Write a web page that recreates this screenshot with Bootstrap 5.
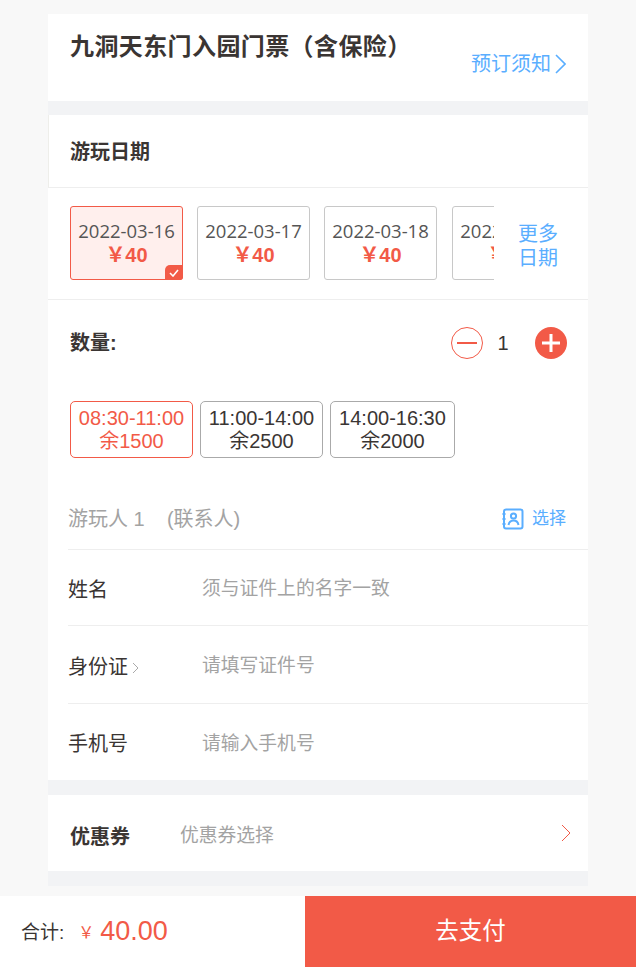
<!doctype html>
<html lang="zh-CN">
<head>
<meta charset="UTF-8" />
<meta name="viewport" content="width=device-width, initial-scale=1.0" />
<title>填写订单</title>
<link href="https://cdn.jsdelivr.net/npm/bootstrap@5.3.0/dist/css/bootstrap.min.css" rel="stylesheet" />
<style>
  html, body { height: 967px; overflow: hidden; }
  body { background: #f8f8f8; color: #3a3533; font-family: "Microsoft YaHei", "Liberation Sans", "Noto Sans CJK SC", sans-serif; font-size: 20px; line-height: 1.2; }
  .panel-box { width: 540px; margin: 14px 0 0 48px; background: #fff; }
  .spacer-bar { height: 14px; background: #f2f3f5; }
  .spacer-bar.wide { height: 15px; }
  .title-block { height: 87px; padding: 18px 22px 0; }
  .title-text { font-size: 24px; font-weight: 700; line-height: 30px; letter-spacing: .4px; }
  .blue-text { color: #5aaeff; }
  .notice-link { margin-top: 20px; font-size: 20px; line-height: 24px; gap: 3px; }
  .date-head { height: 73px; padding: 1px 0 0 21px; border-left: 1px solid #eeeeea; border-bottom: 1px solid #eeeeee; font-weight: 700; }
  .date-row { height: 112px; padding: 18px 22px; border-bottom: 1px solid #eeeeee; }
  .date-strip { width: 424px; overflow: hidden; gap: 14px; }
  .date-card { flex: 0 0 113px; height: 74px; border: 1px solid #c8c8c8; border-radius: 3px; color: #555; font-family: "Open Sans", "Noto Sans CJK SC", sans-serif; font-size: 18.5px; padding-top: 11px; position: relative; text-align: center; line-height: 25px; }
  .date-card:last-child { margin-left: 1px; }
  .date-card b { color: #f25a47; font-size: 20px; display: block; font-family: "Liberation Sans", "Noto Sans CJK SC", sans-serif; }
  .date-card.on { background: #ffefed; border-color: #f25a47; }
  .tick-mark { position: absolute; right: -1px; bottom: -1px; width: 18px; height: 15px; background: #f25a47; border-radius: 5px 0 3px 0; display: flex; align-items: center; justify-content: center; }
  .more-link { width: 40px; margin-left: 24px; line-height: 24px; margin-top: 16px; }
  .qty-row { height: 86px; padding: 0 21px 0 22px; }
  .qty-num { width: 52px; padding-right: 12px; text-align: center; font-family: "Liberation Sans", sans-serif; font-size: 20px; }
  .slot-row { gap: 7px; padding-left: 22px; margin-top: 15px; }
  .slot-item { width: 123px; height: 57px; padding-top: 5px; border: 1px solid #aaa; border-radius: 5px; text-align: center; line-height: 23px; font-family: "Liberation Sans", "Noto Sans CJK SC", sans-serif; }
  .slot-item.on { border-color: #f25a47; color: #f25a47; }
  .slot-item.last { width: 125px; }
  .person-head { height: 92px; margin-left: 20px; padding: 49px 22px 0 0; border-bottom: 1px solid #eeeeee; color: #a3a3a3; }
  .person-head .blue-text { font-size: 17px; line-height: 24px; }
  .form-line { height: 78px; margin-left: 20px; padding-top: 4px; border-bottom: 1px solid #eeeeee; }
  .form-line.first { height: 76px; }
  .form-line.end { border-bottom: 0; height: 76px; }
  .form-key { width: 134px; }
  .hint-text { color: #a3a3a3; font-size: 18.8px; }
  .coupon-row { height: 76px; padding: 7px 17px 0 22px; }
  .coupon-row svg { margin-top: -7px; }
  .coupon-key { width: 110px; font-weight: 700; }
  .total-bar { height: 71px; margin-top: 10px; background: #fff; }
  .total-left { width: 305px; padding-left: 21px; }
  .total-label { font-size: 19px; margin: 3px 14px 0 0; }
  .total-unit { font-size: 16px; margin: 3px 6px 0 0; color: #f25a47; }
  .total-num { font-size: 27px; color: #f25a47; }
  .pay-btn { width: 331px; height: 71px; background: #f25a47; color: #fff; font-size: 23.5px; border: 0; border-radius: 0; }
</style>
</head>
<body>
<div class="panel-box">
  <div class="title-block d-flex justify-content-between">
    <div class="title-text">九洞天东门入园门票（含保险）</div>
    <div class="notice-link blue-text d-flex align-items-center align-self-start">预订须知<svg width="12" height="22" viewBox="0 0 12 22" fill="none" stroke="#5aaeff" stroke-width="1.6"><path d="M2 2l9 9-9 9"/></svg></div>
  </div>
  <div class="spacer-bar"></div>

  <div class="date-head d-flex align-items-center">游玩日期</div>
  <div class="date-row d-flex">
    <div class="date-strip d-flex">
      <div class="date-card on">2022-03-16<b>￥40</b>
        <span class="tick-mark"><svg width="10" height="8" viewBox="0 0 10 8" fill="none" stroke="#fff" stroke-width="1.6"><path d="M1 4l3 3 5-6"/></svg></span>
      </div>
      <div class="date-card">2022-03-17<b>￥40</b></div>
      <div class="date-card">2022-03-18<b>￥40</b></div>
      <div class="date-card">2022-03-19<b>￥40</b></div>
    </div>
    <div class="more-link blue-text">更多日期</div>
  </div>

  <div class="qty-row d-flex align-items-center justify-content-between">
    <b>数量:</b>
    <div class="d-flex align-items-center">
      <svg width="32" height="32" viewBox="0 0 32 32"><circle cx="16" cy="16" r="15.500" fill="#fff" stroke="#f25a47"/><path d="M6 16h20" stroke="#f25a47" stroke-width="2"/></svg>
      <span class="qty-num">1</span>
      <svg width="32" height="32" viewBox="0 0 32 32"><circle cx="16" cy="16" r="16" fill="#f25a47"/><path d="M7 16h18M16 7v18" stroke="#fff" stroke-width="3"/></svg>
    </div>
  </div>

  <div class="slot-row d-flex">
    <div class="slot-item on">08:30-11:00<br>余1500</div>
    <div class="slot-item">11:00-14:00<br>余2500</div>
    <div class="slot-item last">14:00-16:30<br>余2000</div>
  </div>

  <div class="person-head d-flex justify-content-between">
    <span class="align-self-start">游玩人 1 &nbsp;&nbsp;&nbsp;(联系人)</span>
    <span class="blue-text d-flex align-items-center align-self-start gap-2">
      <svg width="22" height="22" viewBox="0 0 22 22" fill="none" stroke="#5aaeff" stroke-width="2"><rect x="2" y="1.500" width="18.500" height="19" rx="2"/><circle cx="11.500" cy="8" r="2.600"/><path d="M6.500 17c.5-3 2.500-4.500 5-4.500s4.500 1.500 5 4.500M.5 6h3M.5 11h3M.5 16h3"/></svg>
      选择
    </span>
  </div>
  <div class="form-line first d-flex align-items-center"><span class="form-key">姓名</span><span class="hint-text">须与证件上的名字一致</span></div>
  <div class="form-line d-flex align-items-center">
    <span class="form-key d-flex align-items-center">身份证<svg class="ms-1" width="8" height="14" viewBox="0 0 8 14" fill="none" stroke="#aaa"><path d="M1 3l5 5-5 5"/></svg></span>
    <span class="hint-text">请填写证件号</span>
  </div>
  <div class="form-line end d-flex align-items-center"><span class="form-key">手机号</span><span class="hint-text">请输入手机号</span></div>
  <div class="spacer-bar wide"></div>

  <div class="coupon-row d-flex align-items-center">
    <span class="coupon-key">优惠券</span>
    <span class="hint-text flex-grow-1">优惠券选择</span>
    <svg width="10" height="18" viewBox="0 0 10 18" fill="none" stroke="#f25a47"><path d="M1 1l8 8-8 8"/></svg>
  </div>
  <div class="spacer-bar wide"></div>
</div>

<div class="total-bar d-flex">
  <div class="total-left d-flex align-items-center">
    <span class="total-label">合计:</span>
    <span class="total-unit">￥</span><span class="total-num">40.00</span>
  </div>
  <button type="button" class="btn pay-btn">去支付</button>
</div>

<script src="https://cdn.jsdelivr.net/npm/bootstrap@5.3.0/dist/js/bootstrap.bundle.min.js"></script>
</body>
</html>
